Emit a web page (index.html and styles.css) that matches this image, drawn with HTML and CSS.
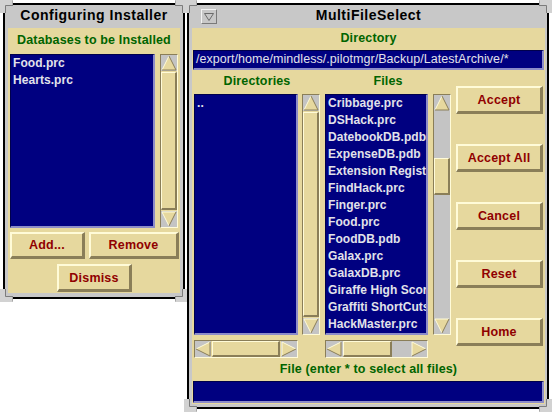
FILE: index.html
```html
<!DOCTYPE html>
<html>
<head>
<meta charset="utf-8">
<link rel="stylesheet" href="styles.css">
</head>
<body>
<div class="desk">

  <div class="win win-install">
    <svg class="corner c-tl" width="13" height="13" viewBox="0 0 13 13"><polygon points="0,0 13,0 13,5 5,5 5,13 0,13" fill="#d2d2d2"/><polyline points="13,0.5 13,5.5 5.5,5.5 5.5,13" fill="none" stroke="#7c7c7c"/></svg>
    <svg class="corner c-tr" width="13" height="13" viewBox="0 0 13 13"><polygon points="0,0 13,0 13,5 5,5 5,13 0,13" fill="#d2d2d2"/><polyline points="13,0.5 13,5.5 5.5,5.5 5.5,13" fill="none" stroke="#7c7c7c"/></svg>
    <svg class="corner c-bl" width="13" height="13" viewBox="0 0 13 13"><polygon points="0,0 13,0 13,5 5,5 5,13 0,13" fill="#d2d2d2"/><polyline points="13,0.5 13,5.5 5.5,5.5 5.5,13" fill="none" stroke="#7c7c7c"/></svg>
    <svg class="corner c-br" width="13" height="13" viewBox="0 0 13 13"><polygon points="0,0 13,0 13,5 5,5 5,13 0,13" fill="#d2d2d2"/><polyline points="13,0.5 13,5.5 5.5,5.5 5.5,13" fill="none" stroke="#7c7c7c"/></svg>

    <div class="titlebar titlebar-install"><span class="title">Configuring Installer</span></div>
    <div class="body body-install">
      <div class="label label-db">Databases to be Installed</div>
      <div class="listrow-db">
        <div class="list list-db">
          <div class="item">Food.prc</div>
          <div class="item">Hearts.prc</div>
        </div>
        <div class="vscroll vscroll-db">
          <div class="arrow"><svg width="16" height="16" viewBox="0 0 16 16"><polygon points="8,1 15,15 1,15" fill="#e6d89e"/><polyline points="1,15 8,1" fill="none" stroke="#fffbd8"/><polyline points="8,1 15,15 1,15" fill="none" stroke="#8a7e58"/></svg></div>
          <div class="thumb thumb-full"></div>
          <div class="arrow"><svg width="16" height="16" viewBox="0 0 16 16"><polygon points="1,1 15,1 8,15" fill="#e6d89e"/><polyline points="8,15 1,1 15,1" fill="none" stroke="#fffbd8"/><polyline points="15,1 8,15" fill="none" stroke="#8a7e58"/></svg></div>
        </div>
      </div>
      <div class="btnrow-db">
        <div class="btn btn-add">Add...</div>
        <div class="btn btn-remove">Remove</div>
      </div>
      <div class="btnrow-dismiss">
        <div class="btn btn-dismiss">Dismiss</div>
      </div>
    </div>
  </div>

  <div class="win win-mfs">
    <svg class="corner c-tl" width="13" height="13" viewBox="0 0 13 13"><polygon points="0,0 13,0 13,5 5,5 5,13 0,13" fill="#d2d2d2"/><polyline points="13,0.5 13,5.5 5.5,5.5 5.5,13" fill="none" stroke="#7c7c7c"/></svg>
    <svg class="corner c-tr" width="13" height="13" viewBox="0 0 13 13"><polygon points="0,0 13,0 13,5 5,5 5,13 0,13" fill="#d2d2d2"/><polyline points="13,0.5 13,5.5 5.5,5.5 5.5,13" fill="none" stroke="#7c7c7c"/></svg>
    <svg class="corner c-bl" width="13" height="13" viewBox="0 0 13 13"><polygon points="0,0 13,0 13,5 5,5 5,13 0,13" fill="#d2d2d2"/><polyline points="13,0.5 13,5.5 5.5,5.5 5.5,13" fill="none" stroke="#7c7c7c"/></svg>
    <svg class="corner c-br" width="13" height="13" viewBox="0 0 13 13"><polygon points="0,0 13,0 13,5 5,5 5,13 0,13" fill="#d2d2d2"/><polyline points="13,0.5 13,5.5 5.5,5.5 5.5,13" fill="none" stroke="#7c7c7c"/></svg>

    <div class="titlebar titlebar-mfs">
      <div class="menubtn"><svg width="14" height="13" viewBox="0 0 14 13"><polygon points="2.5,3.5 11.5,3.5 7,10.5" fill="none" stroke="#6a6a6a"/></svg></div>
      <span class="title">MultiFileSelect</span>
      <div></div>
    </div>
    <div class="body body-mfs">
      <div class="label label-dir">Directory</div>
      <div class="field field-dir">/export/home/mindless/.pilotmgr/Backup/LatestArchive/*</div>

      <div class="mid">
        <div class="lists">
          <div class="colheads">
            <div class="label colhead">Directories</div>
            <div class="label colhead">Files</div>
          </div>
          <div class="listrow">
            <div class="list list-dirs">
              <div class="item">..</div>
            </div>
            <div class="vscroll">
              <div class="arrow"><svg width="16" height="16" viewBox="0 0 16 16"><polygon points="8,1 15,15 1,15" fill="#e6d89e"/><polyline points="1,15 8,1" fill="none" stroke="#fffbd8"/><polyline points="8,1 15,15 1,15" fill="none" stroke="#8a7e58"/></svg></div>
              <div class="thumb thumb-full"></div>
              <div class="arrow"><svg width="16" height="16" viewBox="0 0 16 16"><polygon points="1,1 15,1 8,15" fill="#e6d89e"/><polyline points="8,15 1,1 15,1" fill="none" stroke="#fffbd8"/><polyline points="15,1 8,15" fill="none" stroke="#8a7e58"/></svg></div>
            </div>
            <div class="list list-files">
              <div class="item">Cribbage.prc</div>
              <div class="item">DSHack.prc</div>
              <div class="item">DatebookDB.pdb</div>
              <div class="item">ExpenseDB.pdb</div>
              <div class="item">Extension Registry.prc</div>
              <div class="item">FindHack.prc</div>
              <div class="item">Finger.prc</div>
              <div class="item">Food.prc</div>
              <div class="item">FoodDB.pdb</div>
              <div class="item">Galax.prc</div>
              <div class="item">GalaxDB.prc</div>
              <div class="item">Giraffe High Scores.pdb</div>
              <div class="item">Graffiti ShortCuts.prc</div>
              <div class="item">HackMaster.prc</div>
            </div>
            <div class="vscroll vscroll-files">
              <div class="arrow"><svg width="16" height="16" viewBox="0 0 16 16"><polygon points="8,1 15,15 1,15" fill="#e6d89e"/><polyline points="1,15 8,1" fill="none" stroke="#fffbd8"/><polyline points="8,1 15,15 1,15" fill="none" stroke="#8a7e58"/></svg></div>
              <div class="track">
                <div class="thumb thumb-files"></div>
              </div>
              <div class="arrow"><svg width="16" height="16" viewBox="0 0 16 16"><polygon points="1,1 15,1 8,15" fill="#e6d89e"/><polyline points="8,15 1,1 15,1" fill="none" stroke="#fffbd8"/><polyline points="15,1 8,15" fill="none" stroke="#8a7e58"/></svg></div>
            </div>
          </div>
          <div class="hrow">
            <div class="hscroll hscroll-dirs">
              <div class="arrow"><svg width="16" height="16" viewBox="0 0 16 16"><polygon points="1,8 15,1 15,15" fill="#e6d89e"/><polyline points="1,8 15,1" fill="none" stroke="#fffbd8"/><polyline points="15,1 15,15 1,8" fill="none" stroke="#8a7e58"/></svg></div>
              <div class="thumb thumb-full"></div>
              <div class="arrow"><svg width="16" height="16" viewBox="0 0 16 16"><polygon points="1,1 15,8 1,15" fill="#e6d89e"/><polyline points="1,15 1,1 15,8" fill="none" stroke="#fffbd8"/><polyline points="15,8 1,15" fill="none" stroke="#8a7e58"/></svg></div>
            </div>
            <div class="hscroll hscroll-files">
              <div class="arrow"><svg width="16" height="16" viewBox="0 0 16 16"><polygon points="1,8 15,1 15,15" fill="#e6d89e"/><polyline points="1,8 15,1" fill="none" stroke="#fffbd8"/><polyline points="15,1 15,15 1,8" fill="none" stroke="#8a7e58"/></svg></div>
              <div class="htrack">
                <div class="thumb thumb-hfiles"></div>
              </div>
              <div class="arrow"><svg width="16" height="16" viewBox="0 0 16 16"><polygon points="1,1 15,8 1,15" fill="#e6d89e"/><polyline points="1,15 1,1 15,8" fill="none" stroke="#fffbd8"/><polyline points="15,8 1,15" fill="none" stroke="#8a7e58"/></svg></div>
            </div>
          </div>
        </div>
        <div class="buttons">
          <div class="btn btn-side">Accept</div>
          <div class="btn btn-side">Accept All</div>
          <div class="btn btn-side">Cancel</div>
          <div class="btn btn-side">Reset</div>
          <div class="btn btn-side">Home</div>
        </div>
      </div>

      <div class="label label-file">File (enter * to select all files)</div>
      <div class="field field-file"></div>
    </div>
  </div>

</div>
</body>
</html>
```

FILE: styles.css
```css
html, body {
  margin: 0;
  padding: 0;
  background: #ffffff;
}
body {
  width: 553px;
  height: 413px;
  overflow: hidden;
  font-family: "Liberation Sans", Arial, sans-serif;
}
.desk {
  position: relative;
  width: 553px;
  height: 413px;
}
.win {
  position: absolute;
  top: 3px;
  box-sizing: border-box;
  border: 2px solid #000000;
  background: #c8c8c8;
  display: flex;
  flex-direction: column;
}
.win-install {
  left: 3px;
  width: 182px;
  height: 296px;
  padding: 0 3px 4px 3px;
}
.win-mfs {
  left: 187px;
  width: 362px;
  height: 406px;
  padding: 0 2px 3px 3px;
}
.corner {
  position: absolute;
  display: block;
}
.c-tl { top: -5px; left: -5px; }
.c-tr { top: -5px; right: -5px; transform: scaleX(-1); }
.c-bl { bottom: -5px; left: -5px; transform: scaleY(-1); }
.c-br { bottom: -5px; right: -5px; transform: scale(-1, -1); }

.titlebar {
  box-sizing: border-box;
  height: 23px;
  padding-bottom: 3px;
  flex: none;
  font-weight: bold;
  font-size: 14px;
  letter-spacing: 0.5px;
  color: #000000;
}
.titlebar-install {
  display: flex;
  align-items: center;
  justify-content: center;
}
.titlebar-mfs {
  display: grid;
  grid-template-columns: 1fr auto 1fr;
  align-items: center;
}
.menubtn {
  justify-self: start;
  margin-left: 9px;
  margin-top: 3px;
  width: 14px;
  height: 13px;
  border: 1px solid;
  border-color: #f4f4f4 #7a7a7a #7a7a7a #f4f4f4;
  background: #c8c8c8;
}
.menubtn svg { display: block; }

.body {
  flex: 1;
  background: #e6d89e;
  display: flex;
  flex-direction: column;
}
.label {
  color: #006400;
  font-weight: bold;
  font-size: 12.5px;
  letter-spacing: 0.15px;
  text-align: center;
}
.label-db {
  height: 26px;
  line-height: 24px;
}

.list {
  box-sizing: border-box;
  background: #000080;
  border-style: solid;
  border-width: 1px 2px 2px 1px;
  border-color: #00004c #8c8cc8 #8c8cc8 #00004c;
  overflow: hidden;
  color: #e2e2ea;
  font-weight: bold;
  font-size: 12px;
  letter-spacing: 0.05px;
}
.item {
  height: 17px;
  line-height: 17px;
  padding-left: 2px;
  white-space: nowrap;
}

.listrow-db {
  display: flex;
  height: 174px;
  padding: 0 2px;
  gap: 5px;
}
.list-db { width: 145px; }

.vscroll {
  box-sizing: border-box;
  width: 18px;
  border: 1px solid;
  border-color: #8a7e58 #fffbd8 #fffbd8 #8a7e58;
  display: flex;
  flex-direction: column;
  background: #e6d89e;
}
.arrow {
  width: 16px;
  height: 16px;
  flex: none;
  background: #c4c4c4;
}
.arrow svg { display: block; }
.thumb {
  box-sizing: border-box;
  background: #e6d89e;
  border-style: solid;
  border-width: 1px 2px 2px 1px;
  border-color: #fffbd8 #8a7e58 #8a7e58 #fffbd8;
}
.vscroll .thumb-full { flex: 1; margin: 1px 0; }
.hscroll .thumb-full { flex: 1; margin: 0 1px; }

.track {
  flex: 1;
  background: #c4c4c4;
  display: flex;
  flex-direction: column;
}
.thumb-files {
  margin-top: 47px;
  height: 37px;
}

.btnrow-db {
  display: flex;
  margin-top: 4px;
  padding-left: 2px;
  gap: 4px;
  height: 27px;
}
.btn {
  box-sizing: border-box;
  background: #e6d89e;
  border-style: solid;
  border-width: 2px 3px 3px 2px;
  border-color: #fffbd8 #8a7e58 #8a7e58 #fffbd8;
  color: #900000;
  font-weight: bold;
  font-size: 12.5px;
  letter-spacing: 0.2px;
  display: flex;
  align-items: center;
  justify-content: center;
}
.btn-add { width: 75px; }
.btn-remove { width: 90px; }
.btnrow-dismiss {
  display: flex;
  justify-content: center;
  margin-top: 5px;
  height: 28px;
}
.btn-dismiss { width: 75px; margin-left: 1px; }

.label-dir {
  height: 22px;
  line-height: 20px;
}
.field {
  box-sizing: border-box;
  margin: 0 1px;
  background: #000080;
  border-style: solid;
  border-width: 1px 2px 2px 1px;
  border-color: #00004c #8c8cc8 #8c8cc8 #00004c;
  color: #e2e2ea;
  font-size: 12.5px;
  letter-spacing: 0.05px;
  white-space: nowrap;
  overflow: hidden;
}
.field-dir {
  height: 20px;
  line-height: 17px;
  padding-left: 2px;
}

.mid {
  display: flex;
  height: 288px;
}
.lists {
  display: flex;
  flex-direction: column;
  padding-left: 2px;
}
.colheads {
  display: flex;
  gap: 5px;
  height: 24px;
}
.colhead {
  width: 126px;
  line-height: 22px;
}
.listrow {
  display: flex;
  height: 241px;
}
.list-dirs { width: 104px; margin-right: 4px; }
.list-files { width: 103px; margin-left: 5px; margin-right: 5px; }

.hrow {
  display: flex;
  margin-top: 5px;
  height: 18px;
}
.hscroll {
  box-sizing: border-box;
  height: 18px;
  border: 1px solid;
  border-color: #8a7e58 #fffbd8 #fffbd8 #8a7e58;
  display: flex;
  background: #e6d89e;
}
.hscroll-dirs { width: 104px; margin-right: 27px; }
.hscroll-files { width: 103px; }
.htrack {
  flex: 1;
  background: #c4c4c4;
  display: flex;
}
.thumb-hfiles {
  margin-left: 1px;
  width: 49px;
}

.buttons {
  display: flex;
  flex-direction: column;
  margin-left: 5px;
  padding-top: 16px;
  gap: 30px;
}
.btn-side {
  width: 87px;
  height: 28px;
}

.label-file {
  height: 23px;
  line-height: 22px;
}
.field-file {
  height: 22px;
}
```
